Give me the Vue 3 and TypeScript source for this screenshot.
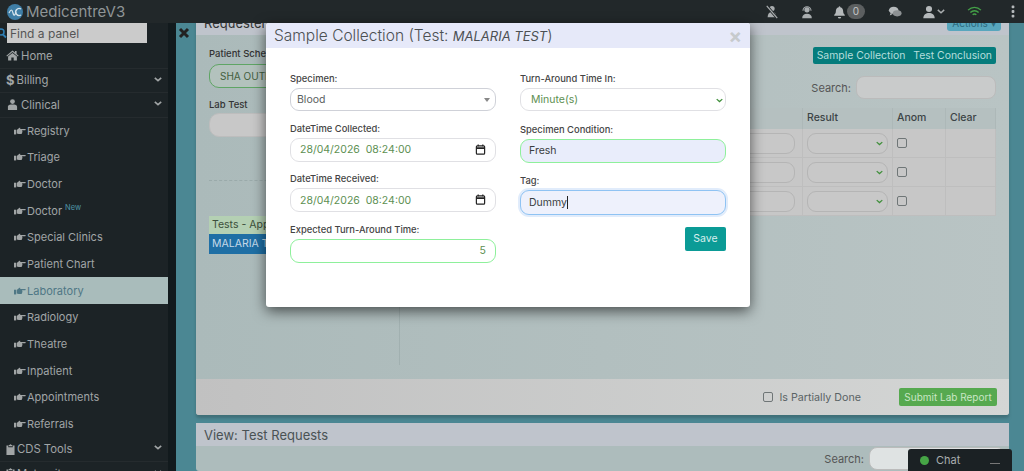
<script setup lang="ts">
type NavItem = { label: string; icon: string; sub?: boolean; active?: boolean; tag?: string; caret?: boolean }

const nav: NavItem[] = [
  { label: 'Home', icon: 'home' },
  { label: 'Billing', icon: 'dollar', caret: true },
  { label: 'Clinical', icon: 'user', caret: true },
  { label: 'Registry', icon: 'hand', sub: true },
  { label: 'Triage', icon: 'hand', sub: true },
  { label: 'Doctor', icon: 'hand', sub: true },
  { label: 'Doctor', icon: 'hand', sub: true, tag: 'New' },
  { label: 'Special Clinics', icon: 'hand', sub: true },
  { label: 'Patient Chart', icon: 'hand', sub: true },
  { label: 'Laboratory', icon: 'hand', sub: true, active: true },
  { label: 'Radiology', icon: 'hand', sub: true },
  { label: 'Theatre', icon: 'hand', sub: true },
  { label: 'Inpatient', icon: 'hand', sub: true },
  { label: 'Appointments', icon: 'hand', sub: true },
  { label: 'Referrals', icon: 'hand', sub: true },
  { label: 'CDS Tools', icon: 'clip', caret: true },
  { label: 'Maternity', icon: 'clip', caret: true },
]

const rows = [1, 2, 3]
</script>

<template>
  <div class="page">
    <header class="topbar">
      <div class="brand">
        <svg class="logo" viewBox="0 0 16 16">
          <circle cx="8" cy="8" r="8" fill="#3f7ea6" />
          <path d="M2 9c2-4 3-4 4 0s2 2 3-1" fill="none" stroke="#d5e4ec" stroke-width="1.2" />
          <path d="M14 5a3.500 3.500 0 1 0 0 6" fill="none" stroke="#d5e4ec" stroke-width="1.4" />
        </svg>
        <span>MedicentreV3</span>
      </div>
      <div class="tools">
        <svg class="t-mute" viewBox="0 0 16 16" fill="#a9adaf">
          <circle cx="8" cy="4" r="3" />
          <path d="M3 14c0-4 2-6 5-6s5 2 5 6z" />
          <path d="M2 1l12 14" stroke="#22282a" stroke-width="3.200" />
          <path d="M2 1l12 14" stroke="#a9adaf" stroke-width="1.400" />
        </svg>
        <svg class="t-agent" viewBox="0 0 16 16" fill="#a9adaf">
          <circle cx="8" cy="5.500" r="3" />
          <path d="M2.800 6.500a5.200 5.200 0 0 1 10.400 0h-1.200a4 4 0 0 0-8 0z" />
          <path d="M2.500 15c0-3 2-5 5.500-5s5.500 2 5.500 5z" />
        </svg>
        <svg class="t-bell" viewBox="0 0 16 16" fill="#b5b9bb">
          <path d="M8 1a1 1 0 0 1 1 1c2.500.5 3.500 2.500 3.500 5 0 2.500 1 3.500 2 4.500v1H1.500v-1c1-1 2-2 2-4.500 0-2.500 1-4.500 3.500-5a1 1 0 0 1 1-1z" />
          <path d="M6 14h4a2 2 0 0 1-4 0z" />
        </svg>
        <span class="badge">0</span>
        <svg class="t-chat" viewBox="0 0 16 16" fill="#b5b9bb">
          <ellipse cx="6.500" cy="6" rx="5.500" ry="4" />
          <path d="M3 9l-1 3 4-2z" />
          <ellipse cx="10.500" cy="9.500" rx="5" ry="3.500" fill="#8d9193" />
        </svg>
        <svg class="t-user" viewBox="0 0 16 16" fill="#b5b9bb">
          <circle cx="8" cy="4.500" r="3.500" />
          <path d="M1.500 15c0-4 3-6 6.500-6s6.500 2 6.500 6z" />
        </svg>
        <svg class="t-down" viewBox="0 0 10 6"><path d="M1 1l4 3.500L9 1" fill="none" stroke="#a9adaf" stroke-width="1.800" /></svg>
        <svg class="t-wifi" viewBox="0 0 16 12" fill="none" stroke="#43a047" stroke-width="1.500">
          <path d="M1 4.500c4-4 10-4 14 0" />
          <path d="M3.500 7c2.500-2.500 6.500-2.500 9 0" />
          <path d="M6 9.500c1-1 3-1 4 0" />
        </svg>
        <svg class="t-dots" viewBox="0 0 4 14" fill="#b5b9bb">
          <rect x="0.500" y="0.500" width="3" height="3" rx="1" />
          <rect x="0.500" y="5.500" width="3" height="3" rx="1" />
          <rect x="0.500" y="10.500" width="3" height="3" rx="1" />
        </svg>
      </div>
    </header>

    <div class="shell">
      <aside class="sidebar">
        <div class="find">
          <svg class="find-icon" viewBox="0 0 7 12"><circle cx="1" cy="5" r="3" fill="none" stroke="#2f7fb5" stroke-width="1.500" /><path d="M3 7.500l3 3" stroke="#2f7fb5" stroke-width="1.800" /></svg>
          <input class="find-input" type="text" placeholder="Find a panel" />
        </div>
        <nav>
          <a
            v-for="(item, i) in nav"
            :key="i"
            class="nav-item"
            :class="{ sub: item.sub, active: item.active }"
          >
            <svg v-if="item.icon === 'hand'" class="ico hand" viewBox="0 0 14 10" fill="currentColor">
              <path d="M0 3.500h2.500v5.500H0z" />
              <path d="M3.200 3.800 6 1.500c.6-.5 1.300-.4 1.500.2l-.5 1h6c1 0 1 1.500 0 1.500H9.500v.8c.6.2.5 1.100 0 1.300.3.500.1 1.100-.4 1.200.2.500-.1 1-.7 1H5.500L3.200 8z" />
            </svg>
            <svg v-else-if="item.icon === 'home'" class="ico top" viewBox="0 0 14 12" fill="currentColor">
              <path d="M7 0.500 0.300 6.200l.8.900L7 2.200l5.900 4.900.8-.9-2.200-1.900V1h-1.800v1.700z" />
              <path d="M2.200 7.200 7 3.200l4.800 4v4.300H8.300V8.300H5.700v3.200H2.200z" />
            </svg>
            <span v-else-if="item.icon === 'dollar'" class="dollar">$</span>
            <svg v-else-if="item.icon === 'user'" class="ico top" viewBox="0 0 12 12" fill="currentColor">
              <circle cx="6" cy="2.800" r="2.600" />
              <path d="M1 12V8.500C1 7 2.500 6 4 6h4c1.500 0 3 1 3 2.500V12z" />
            </svg>
            <svg v-else class="ico clip" viewBox="0 0 10 12" fill="currentColor">
              <path d="M3 1h1c0-1 2-1 2 0h1v1.500H3z" />
              <path d="M0.500 1.500H2.500V3.500h5v-2h2V12h-9z" />
            </svg>
            <span class="nav-label">{{ item.label }}<sup v-if="item.tag">{{ item.tag }}</sup></span>
            <svg v-if="item.caret" class="caret" viewBox="0 0 10 6"><path d="M1 1l4 3.500L9 1" fill="none" stroke="currentColor" stroke-width="2" /></svg>
          </a>
        </nav>
      </aside>

      <main class="content">
        <div class="rail">
          <svg class="rail-x" viewBox="0 0 12 12"><path d="M2 2l8 8M10 2l-8 8" stroke="#222" stroke-width="3" /></svg>
        </div>
        <div class="panels">
          <section class="panel first">
            <div class="panel-head">
              <span>Requester: Outpatient Request</span>
              <button class="actions">Actions ▾</button>
            </div>
            <div class="panel-body">
              <div class="left-col">
                <label class="p-label">Patient Scheme</label>
                <input class="p-input scheme" type="text" value="SHA OUTPATIENT" />
                <label class="p-label lab">Lab Test</label>
                <input class="p-input" type="text" />
                <hr class="dash" />
                <div class="tests-head">Tests - Approved</div>
                <div class="test-row">MALARIA TEST</div>
              </div>
              <div class="right-col">
                <div class="btn-group">
                  <span>Sample Collection</span>
                  <span>Test Conclusion</span>
                </div>
                <div class="search-row">
                  <label>Search:</label>
                  <input type="text" />
                </div>
                <div class="grid-table">
                  <div class="th"></div>
                  <div class="th">Result</div>
                  <div class="th">Anom</div>
                  <div class="th">Clear</div>
                  <template v-for="r in rows" :key="r">
                    <div class="td first-td"><input class="cell-input" type="text" /></div>
                    <div class="td select-cell">
                      <div class="cell-input"></div>
                      <svg class="cell-caret" viewBox="0 0 10 6"><path d="M1 1l4 3.500L9 1" fill="none" stroke="#3f8f3a" stroke-width="1.800" /></svg>
                    </div>
                    <div class="td"><span class="check"></span></div>
                    <div class="td"></div>
                  </template>
                </div>
              </div>
            </div>
            <div class="panel-foot">
              <span class="check"></span>
              <span class="partial">Is Partially Done</span>
              <button class="submit">Submit Lab Report</button>
            </div>
          </section>

          <section class="panel second">
            <div class="panel-head view">View: Test Requests</div>
            <div class="search-row lower">
              <label>Search:</label>
              <input type="text" />
            </div>
          </section>
        </div>
      </main>
    </div>

    <div class="modal">
      <div class="modal-head">
        <h2>Sample Collection (Test: <em>MALARIA TEST</em>)</h2>
        <span class="close">×</span>
      </div>
      <div class="modal-body">
        <div class="form-col">
          <div class="field">
            <label>Specimen:</label>
            <div class="control">
              <input class="inp plain" type="text" value="Blood" />
              <span class="tri"></span>
            </div>
          </div>
          <div class="field">
            <label>DateTime Collected:</label>
            <div class="control">
              <input class="inp date" type="text" value="28/04/2026  08:24:00" />
              <svg class="cal" viewBox="0 0 12 12" fill="none" stroke="#222" stroke-width="1.300"><rect x="1.500" y="2" width="9" height="9" rx="1" /><path d="M1.500 4.500h9" stroke-width="2" /><path d="M3.500 .5v2M8.500 .5v2" /></svg>
            </div>
          </div>
          <div class="field">
            <label>DateTime Received:</label>
            <div class="control">
              <input class="inp date" type="text" value="28/04/2026  08:24:00" />
              <svg class="cal" viewBox="0 0 12 12" fill="none" stroke="#222" stroke-width="1.300"><rect x="1.500" y="2" width="9" height="9" rx="1" /><path d="M1.500 4.500h9" stroke-width="2" /><path d="M3.500 .5v2M8.500 .5v2" /></svg>
            </div>
          </div>
          <div class="field">
            <label>Expected Turn-Around Time:</label>
            <input class="inp valid num" type="text" value="5" />
          </div>
        </div>
        <div class="form-col right">
          <div class="field">
            <label>Turn-Around Time In:</label>
            <div class="control">
              <input class="inp minute" type="text" value="Minute(s)" />
              <svg class="chev" viewBox="0 0 10 6"><path d="M1 1l4 3.500L9 1" fill="none" stroke="#3f8f3a" stroke-width="1.800" /></svg>
            </div>
          </div>
          <div class="field">
            <label>Specimen Condition:</label>
            <input class="inp filled valid" type="text" value="Fresh" />
          </div>
          <div class="field">
            <label>Tag:</label>
            <div class="control">
              <input class="inp filled focus" type="text" value="Dummy" />
              <span class="cursor"></span>
            </div>
          </div>
          <div class="save-row"><button class="save">Save</button></div>
        </div>
      </div>
    </div>

    <div class="chat">
      <span class="dot"></span>
      <span>Chat</span>
      <span class="min"></span>
    </div>
  </div>
</template>

<style>
html,
body {
  margin: 0;
  background: #1b2124;
}
</style>

<style scoped>
.page {
  position: relative;
  width: 1024px;
  height: 471px;
  overflow: hidden;
  display: flex;
  flex-direction: column;
  font-family: Inter, "Open Sans", sans-serif;
  color: #444;
}
.topbar {
  position: relative;
  z-index: 2;
  flex: 0 0 23px;
  display: flex;
  justify-content: space-between;
  align-items: center;
  background: #22282a;
}
.brand {
  display: flex;
  align-items: center;
  gap: 3px;
  padding-left: 7px;
  color: #8f9597;
  font-size: 15px;
}
.logo {
  width: 16px;
  height: 16px;
}
.tools {
  display: flex;
  align-items: center;
  padding-right: 9px;
}
.tools svg {
  flex: none;
}
.t-mute { width: 14px; height: 14px; margin-right: 21px; }
.t-agent { width: 14px; height: 14px; margin-right: 19px; }
.t-bell { width: 13px; height: 14px; margin-right: 1px; }
.badge {
  width: 18px;
  height: 15px;
  border-radius: 8px;
  background: #5c5f60;
  color: #c5c7c8;
  font-size: 10px;
  line-height: 15px;
  text-align: center;
  margin-right: 23px;
}
.t-chat { width: 14px; height: 14px; margin-right: 20px; }
.t-user { width: 14px; height: 14px; margin-right: 1px; }
.t-down { width: 8px; height: 5px; margin-right: 22px; }
.t-wifi { width: 15px; height: 11px; margin-right: 29px; }
.t-dots { width: 4px; height: 13px; }

.shell {
  flex: 1;
  display: flex;
  min-height: 0;
}
.sidebar {
  flex: 0 0 168px;
  background: #1c2326;
  border-right: 8px solid #121a1d;
  color: #a1a5a6;
  font-size: 11px;
}
.find {
  display: flex;
  align-items: center;
  height: 21px;
  padding-bottom: 1px;
  box-sizing: border-box;
}
.find-icon {
  width: 7px;
  height: 12px;
  flex: none;
}
.find-input {
  width: 140px;
  height: 20px;
  box-sizing: border-box;
  border: 0;
  padding: 0 3px;
  background: #cbcbcb;
  font: 12px Inter, sans-serif;
}
.find-input::placeholder {
  color: #555;
}
.nav-item {
  display: flex;
  align-items: center;
  height: 24.500px;
  padding-left: 6px;
  gap: 2px;
  box-sizing: border-box;
  border-bottom: 1px solid #252b2e;
  position: relative;
}
.nav-item.sub {
  height: 26.670px;
  padding-left: 14px;
  gap: 1px;
  border-bottom: 0;
}
.nav-item.active {
  background: #a9bcbb;
  color: #4f7785;
}
.ico.hand {
  width: 12px;
  height: 10px;
  flex: none;
}
.ico.top {
  width: 13px;
  height: 11px;
  flex: none;
}
.ico.clip {
  width: 9px;
  height: 11px;
  flex: none;
}
.dollar {
  font-weight: 700;
  font-size: 13px;
}
sup {
  font-size: 7.500px;
  color: #4f93a6;
  margin-left: 3px;
  line-height: 0;
}
.caret {
  position: absolute;
  right: 6px;
  top: 8px;
  width: 8px;
  height: 5px;
}
.nav-item:not(.sub) {
  font-size: 11.300px;
}

.content {
  flex: 1;
  display: flex;
  background: #4b8793;
  min-width: 0;
}
.rail {
  flex: 0 0 20px;
  box-sizing: border-box;
  padding: 4px 0 0 2px;
}
.rail-x {
  display: block;
  width: 12px;
  height: 12px;
}
.panels {
  flex: 1;
  margin: -13px 15px 0 0;
  display: flex;
  flex-direction: column;
  gap: 8px;
  min-width: 0;
}
.panel {
  border-radius: 3px;
  background: #adbcbc;
}
.panel.first {
  flex: 0 0 405px;
  display: flex;
  flex-direction: column;
  box-shadow: 0 3px 3px #3f6f78;
}
.panel.second {
  flex: 1;
}
.panel-head {
  height: 25px;
  box-sizing: border-box;
  display: flex;
  justify-content: space-between;
  align-items: flex-start;
  padding: 5px 8px 0;
  background: #bfc4cc;
  font-size: 13px;
  color: #333;
}
.panel-head.view {
  height: 23px;
  padding-top: 4px;
  color: #4a5254;
}
.actions {
  width: 54px;
  height: 16px;
  border: 0;
  border-radius: 3px;
  padding: 0;
  background: #58a6bd;
  color: #2c6b80;
  font: 10px Inter, sans-serif;
}
.panel-body {
  flex: 1;
  display: flex;
  min-height: 0;
  background: linear-gradient(90deg, #abbaba, #b9c4c4);
}
.left-col {
  flex: 0 0 204px;
  box-sizing: border-box;
  margin-bottom: 14px;
  padding: 11px 0 0 13px;
  border-right: 1px solid #a1b0b0;
  font-size: 10.500px;
  overflow: hidden;
  display: flex;
  flex-direction: column;
}
.p-label {
  color: #333;
  font-weight: 500;
  line-height: 16px;
  font-size: 9.500px;
}
.p-label.lab {
  margin-top: 9px;
}
.p-input {
  width: 180px;
  height: 24px;
  box-sizing: border-box;
  flex: none;
  border: 1px solid #bdbdbd;
  border-radius: 10px;
  padding: 0 10px;
  background: #c8c8c8;
  color: #44603f;
  font: 10px Inter, sans-serif;
}
.p-input.scheme {
  border-color: #5fa565;
  background: #b3c2bd;
  margin-top: 2px;
}
.dash {
  width: 100%;
  margin: 43px 0 0;
  border: 0;
  border-top: 1px dashed #9aaaaa;
}
.tests-head {
  margin-top: 35px;
  height: 18px;
  line-height: 18px;
  background: #b4d0b3;
  padding-left: 3px;
  color: #3c4f3a;
  font-size: 10.500px;
}
.test-row {
  height: 20px;
  line-height: 20px;
  background: #1f6fa5;
  color: #c5d9e8;
  padding-left: 3px;
}
.right-col {
  flex: 1;
  min-width: 0;
  padding: 12px 13px 0 10px;
  display: flex;
  flex-direction: column;
  font-size: 11px;
}
.btn-group {
  align-self: flex-end;
  display: flex;
  gap: 8px;
  height: 17px;
  align-items: center;
  padding: 0 4px;
  border-radius: 2px;
  background: #057c7c;
  color: #b5dedd;
  font-size: 10.400px;
}
.search-row {
  display: flex;
  justify-content: flex-end;
  align-items: center;
  gap: 5px;
  color: #555;
}
.right-col .search-row {
  margin-top: 12px;
}
.search-row label {
  font-size: 11px;
}
.search-row input {
  width: 140px;
  height: 23px;
  box-sizing: border-box;
  border: 1px solid #bbb;
  border-radius: 8px;
  background: #c9cbcb;
}
.search-row.lower {
  padding: 1px 4px 0 0;
}
.search-row.lower input {
  width: 136px;
  background: #dfe3e3;
}
.grid-table {
  margin-top: 9px;
  display: grid;
  grid-template-columns: 1fr 90px 53px 50px;
  grid-template-rows: 21px repeat(3, 29px);
}
.th {
  background: #b5c0c0;
  border: 1px solid #adb8b8;
  border-width: 0 1px 0 0;
  padding: 3px 4px;
  color: #3c4446;
  font-size: 10.500px;
  font-weight: 500;
}
.td {
  position: relative;
  display: flex;
  align-items: center;
  box-sizing: border-box;
  background: #c7c7c7;
  border: 1px solid #bebebe;
  border-width: 0 1px 1px 0;
  padding: 0 4px;
}
.first-td {
  padding-right: 7px;
}
.cell-input {
  width: 100%;
  height: 21px;
  box-sizing: border-box;
  border: 1px solid #b5b5b5;
  border-radius: 9px;
  background: #c8c8c8;
}
.cell-caret {
  position: absolute;
  right: 9px;
  top: 12px;
  width: 7px;
  height: 5px;
}
.check {
  display: inline-block;
  width: 10px;
  height: 10px;
  box-sizing: border-box;
  border: 1px solid #6f7677;
  border-radius: 2px;
  flex: none;
}
.panel-foot {
  flex: 0 0 36px;
  display: flex;
  align-items: center;
  justify-content: flex-end;
  padding-right: 12px;
  background: linear-gradient(90deg, #c1c1c1, #d4d6d5);
  border-radius: 0 0 3px 3px;
  font-size: 10.700px;
  color: #5a6365;
}
.partial {
  margin: 0 38px 0 6px;
}
.submit {
  width: 98px;
  height: 18px;
  border: 0;
  border-radius: 2px;
  padding: 0;
  background: #56a94f;
  color: #c9e6c5;
  font: 10px Inter, sans-serif;
}

.modal {
  position: absolute;
  z-index: 3;
  left: 266px;
  top: 23px;
  width: 484px;
  height: 284px;
  border-radius: 3px;
  background: #fff;
  box-shadow: 0 4px 14px rgba(0, 0, 0, 0.6);
  overflow: hidden;
}
.modal-head {
  height: 25px;
  background: #e6e9f9;
  display: flex;
  justify-content: space-between;
  align-items: center;
  padding: 0 8px;
}
h2 {
  margin: 0;
  font-size: 15.500px;
  font-weight: 300;
  color: #4c5053;
}
em {
  font-size: 13px;
  font-weight: 400;
}
.close {
  font-size: 20px;
  font-weight: 700;
  line-height: 18px;
  color: #c6cacd;
}
.modal-body {
  display: flex;
  gap: 24px;
  padding: 24px 24px 0;
}
.form-col {
  flex: 0 0 206px;
}
.field {
  margin-bottom: 10.500px;
}
.right .field {
  margin-bottom: 11.500px;
}
.field label {
  display: block;
  height: 16px;
  line-height: 14px;
  font-size: 9.400px;
  font-weight: 500;
  color: #444;
}
.control {
  position: relative;
}
.inp {
  display: block;
  width: 100%;
  height: 24px;
  box-sizing: border-box;
  border: 1px solid #e0e0e4;
  border-radius: 9px;
  padding: 0 9px;
  background: #fff;
  color: #5d8f52;
  font: 10.500px Inter, sans-serif;
  outline: 0;
}
.plain {
  height: 23px;
  padding: 0 6px;
  border-color: #cfd1d8;
  color: #5a5e60;
}
.date {
  white-space: pre;
}
.minute {
  height: 23px;
  padding: 0 10px;
}
.valid {
  border: 1.500px solid #8ef09b;
}
.num {
  text-align: right;
}
.filled {
  padding: 0 8px;
  background: #e9edfb;
  color: #3a3d40;
}
.focus {
  height: 25px;
  background: #eef1fc;
  border-color: #8fc3f3;
  box-shadow: 0 0 0 2px #e1ecfb;
}
.tri {
  position: absolute;
  right: 6px;
  top: 10px;
  border: 3.500px solid transparent;
  border-top: 4px solid #888;
  border-bottom: 0;
}
.cal {
  position: absolute;
  right: 10px;
  top: 6px;
  width: 11px;
  height: 11px;
}
.chev {
  position: absolute;
  right: 3px;
  top: 10px;
  width: 7px;
  height: 5px;
}
.cursor {
  position: absolute;
  left: 47px;
  top: 6px;
  width: 1px;
  height: 13px;
  background: #222;
}
.save-row {
  display: flex;
  justify-content: flex-end;
}
.save {
  width: 41px;
  height: 24px;
  border: 0;
  border-radius: 2px;
  padding: 0;
  background: #0b9b96;
  color: #d7efee;
  font: 10.500px Inter, sans-serif;
}

.chat {
  position: absolute;
  z-index: 4;
  left: 908px;
  bottom: 0;
  width: 104px;
  height: 22px;
  box-sizing: border-box;
  display: flex;
  align-items: center;
  gap: 7px;
  padding-left: 12px;
  border-radius: 3px 3px 0 0;
  background: #1b2124;
  color: #a9adae;
  font-size: 11px;
}
.dot {
  width: 9px;
  height: 9px;
  border-radius: 50%;
  background: #46a546;
}
.min {
  position: absolute;
  right: 12px;
  top: 14px;
  width: 10px;
  height: 1px;
  background: #777;
}
</style>
